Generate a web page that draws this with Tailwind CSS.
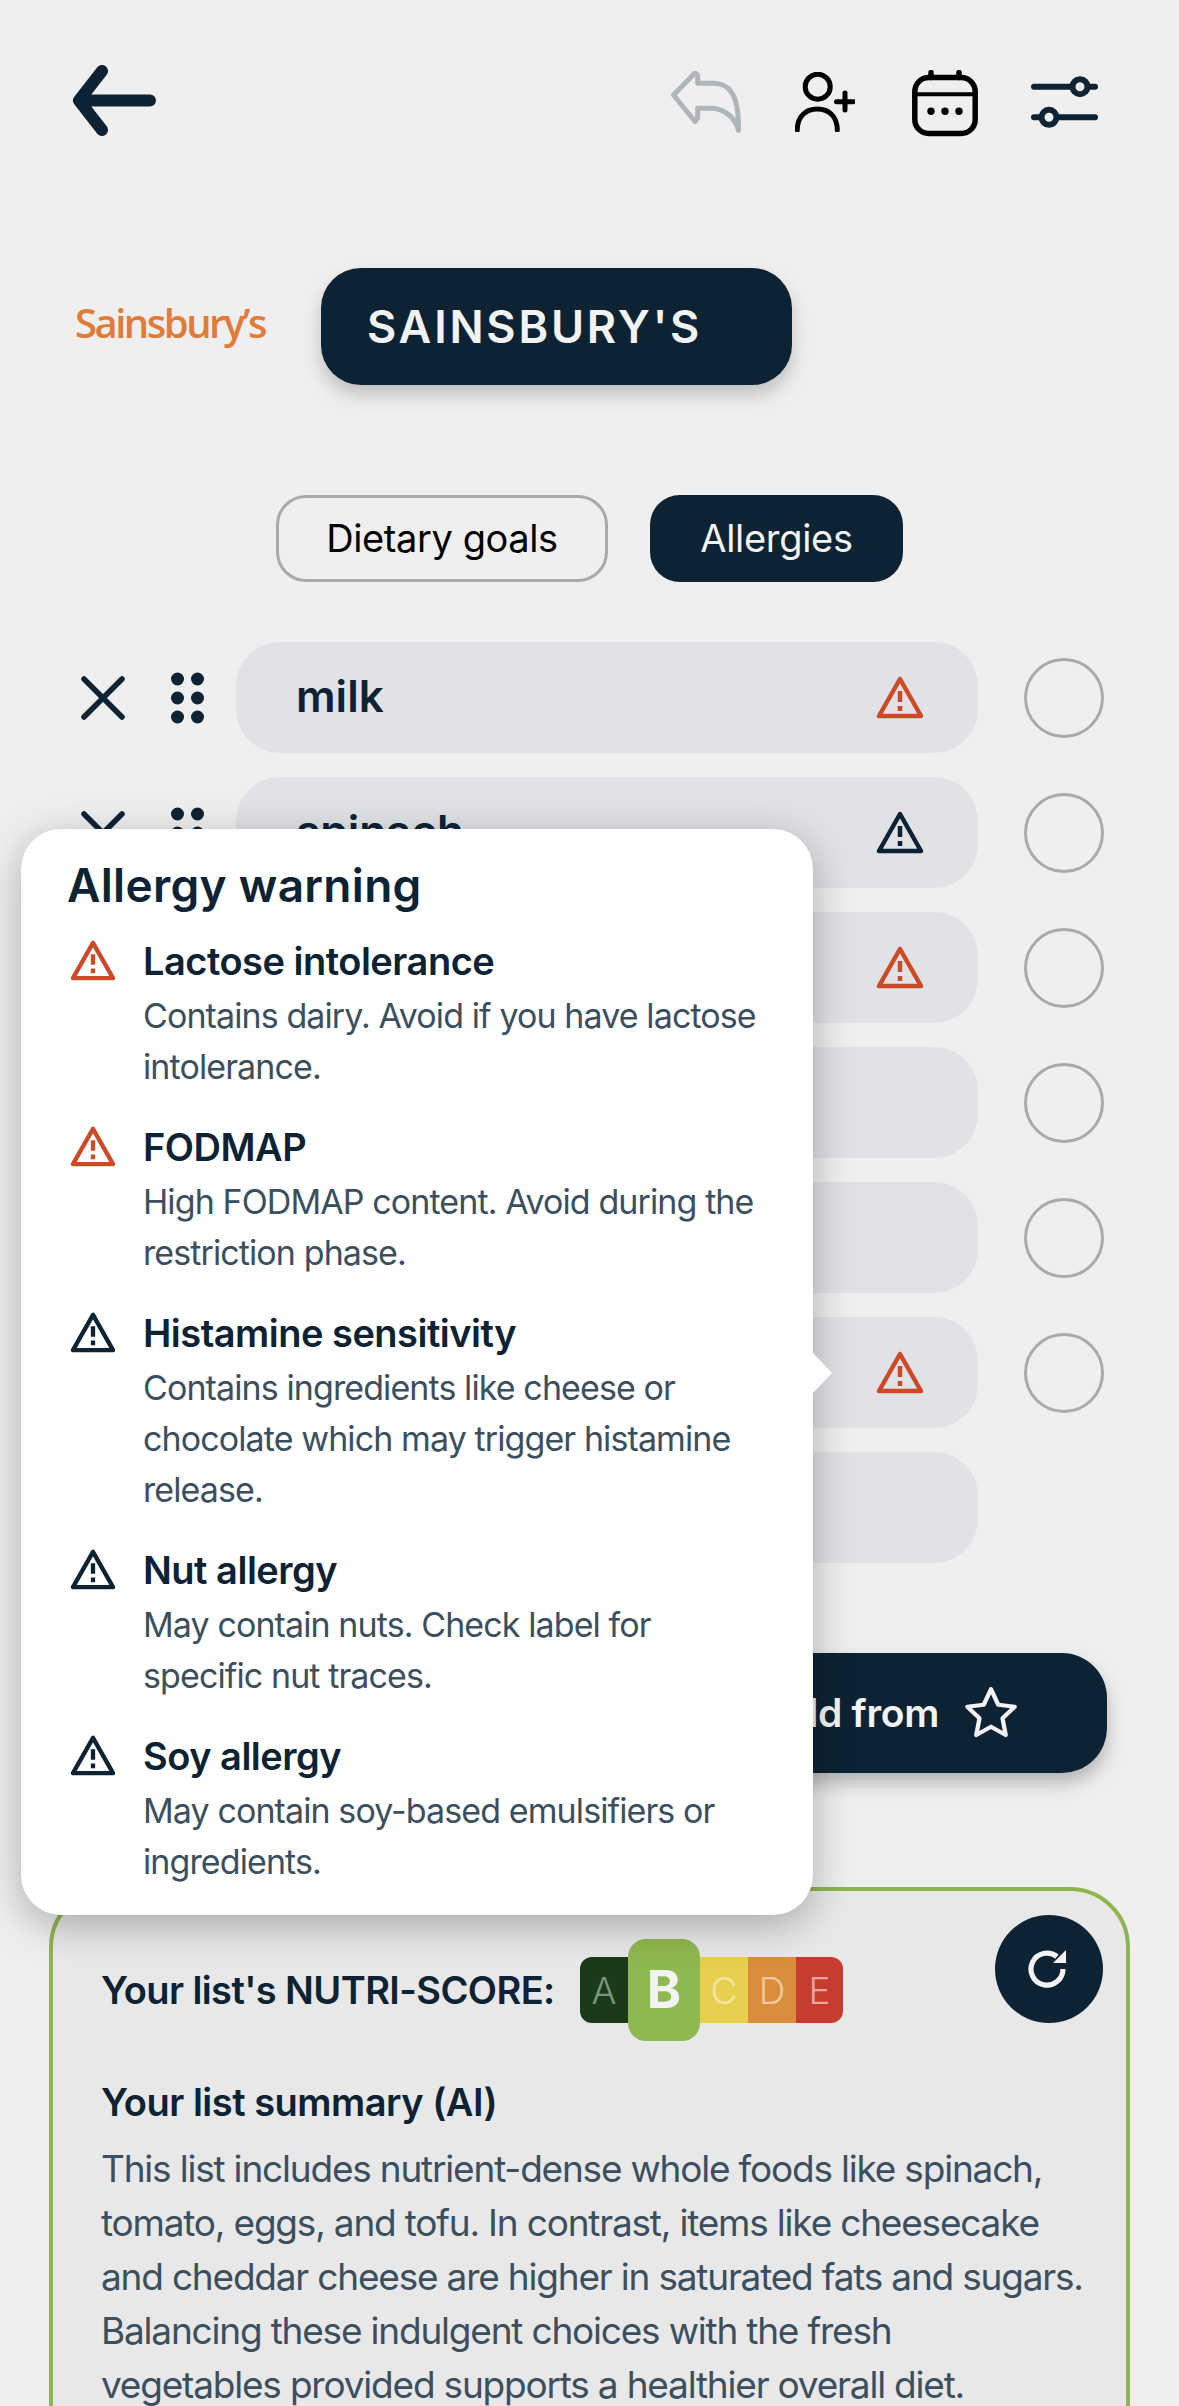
<!DOCTYPE html>
<html lang="en">
<head>
<meta charset="UTF-8">
<meta name="viewport" content="width=device-width, initial-scale=1.0">
<title>Sainsbury's list</title>
<script src="https://cdn.jsdelivr.net/npm/@tailwindcss/browser@4"></script>
</head>
<body class="bg-[#efefef] font-['Inter',sans-serif] text-[#0d2333]">
<div class="relative h-[2406px] w-[1179px] overflow-hidden">

  <!-- Top bar -->
  <header class="flex h-[136px] items-start pl-[72px] pr-[81px] pt-[65px]">
    <svg class="h-[72px] w-[86px]" viewBox="0 0 86 72" fill="none" stroke="#0d2333" stroke-width="12" stroke-linecap="round" stroke-linejoin="round"><path d="M78 35.5H8M30 6L7 35.5 30 65"/></svg>
    <div class="ml-auto flex items-start">
      <svg class="mr-[54px] mt-[6px] h-[62px] w-[70px]" viewBox="0 0 70 62" fill="none" stroke="#aeb6ba" stroke-width="5" stroke-linecap="round" stroke-linejoin="round"><path d="M2.5 24L24 2l2.7 2v8.3H42C58 12.3 68 22 67.5 59.5 64 44 50 37.3 40 37.3H26.7V47L24 50.5z"/></svg>
      <svg class="mr-[57px] mt-[7px] h-[60px] w-[60px]" viewBox="0 0 60 60" fill="none" stroke="#000" stroke-width="5" stroke-linecap="round"><circle cx="22.7" cy="14.7" r="12.5"/><path d="M2.3 58c0-13 8-21 20-21s20 8 20 21M50 21v17M41.5 29.7h17"/></svg>
      <svg class="mr-[53px] mt-[5px] h-[67px] w-[66px]" viewBox="0 0 66 67" fill="none" stroke="#000" stroke-width="5.5" stroke-linecap="round"><rect x="2.8" y="7.5" width="60.4" height="56" rx="14"/><path d="M3 24.3h60" stroke-width="4"/><path d="M19 2.5v5M47 2.5v5"/><circle cx="19" cy="41.3" r="3.7" fill="#000" stroke="none"/><circle cx="33" cy="41.3" r="3.7" fill="#000" stroke="none"/><circle cx="47" cy="41.3" r="3.7" fill="#000" stroke="none"/></svg>
      <svg class="mt-[11px] h-[52px] w-[67px]" viewBox="0 0 67 52" fill="none" stroke="#0d2333" stroke-width="6" stroke-linecap="round"><path d="M3 10.7h61M3 41.3h61"/><circle cx="49" cy="10.7" r="7.5" fill="#efefef"/><circle cx="18" cy="41.3" r="7.5" fill="#efefef"/></svg>
    </div>
  </header>

  <!-- Store -->
  <div class="mt-[132px] flex items-center pl-[75px]">
    <span class="mt-[-8px] w-[246px] font-['Open_Sans',sans-serif] text-[40px] leading-none font-semibold tracking-[-2.5px] text-[#e07b39]">Sainsbury’s</span>
    <div class="flex h-[117px] w-[471px] items-center rounded-[40px] bg-[#0d2333] pl-[46px] text-[45px] font-semibold tracking-[2.8px] text-[#f3f3f3] shadow-[0_10px_18px_rgba(0,0,0,0.2)]">SAINSBURY'S</div>
  </div>

  <!-- Tabs -->
  <div class="mt-[110px] flex justify-start gap-[42px] pl-[276px]">
    <div class="flex h-[87px] w-[332px] items-center justify-center rounded-[30px] border-[3px] border-[#aaaaaa] text-[38px] tracking-[-0.4px] text-black">Dietary goals</div>
    <div class="flex h-[87px] w-[253px] items-center justify-center rounded-[30px] bg-[#0d2333] text-[38px] tracking-[-0.3px] text-[#f3f3f3]">Allergies</div>
  </div>

  <!-- Items -->
  <div class="mt-[60px] flex flex-col gap-[24px]">
    <div class="flex h-[111px] items-center">
      <svg class="ml-[81px] h-[44px] w-[44px]" viewBox="0 0 44 44" stroke="#0d2333" stroke-width="5.5" stroke-linecap="round"><path d="M3 3l38 38M41 3L3 41"/></svg>
      <svg class="ml-[46px] h-[52px] w-[33px]" viewBox="0 0 33 52" fill="#0d2333"><circle cx="6.5" cy="7" r="6.5"/><circle cx="26.5" cy="7" r="6.5"/><circle cx="6.5" cy="26" r="6.5"/><circle cx="26.5" cy="26" r="6.5"/><circle cx="6.5" cy="45" r="6.5"/><circle cx="26.5" cy="45" r="6.5"/></svg>
      <div class="ml-[32px] flex h-[111px] w-[742px] items-center justify-between rounded-[44px] bg-[#e1e2e6] pl-[60px] pr-[54px] text-[44px] font-semibold"><span class="mt-[-3px]">milk</span>
        <svg class="h-[43px] w-[48px]" viewBox="0 0 48 43" fill="none" stroke="#cb4b28" stroke-width="4.5" stroke-linejoin="round"><path d="M24 3L3 40h42z"/><path d="M24 15v11M24 30v5"/></svg>
      </div>
      <span class="ml-[46px] h-[80px] w-[80px] rounded-full border-[3px] border-[#aaaaaa]"></span>
    </div>
    <div class="flex h-[111px] items-center">
      <svg class="ml-[81px] h-[44px] w-[44px]" viewBox="0 0 44 44" stroke="#0d2333" stroke-width="5.5" stroke-linecap="round"><path d="M3 3l38 38M41 3L3 41"/></svg>
      <svg class="ml-[46px] h-[52px] w-[33px]" viewBox="0 0 33 52" fill="#0d2333"><circle cx="6.5" cy="7" r="6.5"/><circle cx="26.5" cy="7" r="6.5"/><circle cx="6.5" cy="26" r="6.5"/><circle cx="26.5" cy="26" r="6.5"/><circle cx="6.5" cy="45" r="6.5"/><circle cx="26.5" cy="45" r="6.5"/></svg>
      <div class="ml-[32px] flex h-[111px] w-[742px] items-center justify-between rounded-[44px] bg-[#e1e2e6] pl-[60px] pr-[54px] text-[44px] font-semibold"><span class="mt-[-3px]">spinach</span>
        <svg class="h-[43px] w-[48px]" viewBox="0 0 48 43" fill="none" stroke="#0d2333" stroke-width="4.5" stroke-linejoin="round"><path d="M24 3L3 40h42z"/><path d="M24 15v11M24 30v5"/></svg>
      </div>
      <span class="ml-[46px] h-[80px] w-[80px] rounded-full border-[3px] border-[#aaaaaa]"></span>
    </div>
    <div class="flex h-[111px] items-center pl-[236px]">
      <div class="flex h-[111px] w-[742px] items-center justify-end rounded-[44px] bg-[#e1e2e6] pr-[54px]">
        <svg class="h-[43px] w-[48px]" viewBox="0 0 48 43" fill="none" stroke="#cb4b28" stroke-width="4.5" stroke-linejoin="round"><path d="M24 3L3 40h42z"/><path d="M24 15v11M24 30v5"/></svg>
      </div>
      <span class="ml-[46px] h-[80px] w-[80px] rounded-full border-[3px] border-[#aaaaaa]"></span>
    </div>
    <div class="flex h-[111px] items-center pl-[236px]">
      <div class="h-[111px] w-[742px] rounded-[44px] bg-[#e1e2e6]"></div>
      <span class="ml-[46px] h-[80px] w-[80px] rounded-full border-[3px] border-[#aaaaaa]"></span>
    </div>
    <div class="flex h-[111px] items-center pl-[236px]">
      <div class="h-[111px] w-[742px] rounded-[44px] bg-[#e1e2e6]"></div>
      <span class="ml-[46px] h-[80px] w-[80px] rounded-full border-[3px] border-[#aaaaaa]"></span>
    </div>
    <div class="flex h-[111px] items-center pl-[236px]">
      <div class="flex h-[111px] w-[742px] items-center justify-end rounded-[44px] bg-[#e1e2e6] pr-[54px]">
        <svg class="h-[43px] w-[48px]" viewBox="0 0 48 43" fill="none" stroke="#cb4b28" stroke-width="4.5" stroke-linejoin="round"><path d="M24 3L3 40h42z"/><path d="M24 15v11M24 30v5"/></svg>
      </div>
      <span class="ml-[46px] h-[80px] w-[80px] rounded-full border-[3px] border-[#aaaaaa]"></span>
    </div>
    <div class="flex h-[111px] items-center pl-[236px]">
      <div class="h-[111px] w-[742px] rounded-[44px] bg-[#e1e2e6]"></div>
    </div>
  </div>

  <!-- Add from -->
  <div class="mt-[90px] flex justify-end pr-[72px]">
    <div class="flex h-[120px] w-[480px] items-center justify-end gap-[22px] rounded-[45px] bg-[#0d2333] pr-[86px] text-[39px] font-semibold tracking-[-0.3px] text-[#f3f3f3] shadow-[0_10px_18px_rgba(0,0,0,0.25)]">
      Add from
      <svg class="h-[60px] w-[60px]" viewBox="0 0 24 24" fill="none" stroke="#f3f3f3" stroke-width="1.7" stroke-linejoin="round"><path d="M12 2.5l2.9 6.2 6.6.8-4.9 4.6 1.3 6.7L12 17.5l-5.9 3.3 1.3-6.7-4.9-4.6 6.6-.8z"/></svg>
    </div>
  </div>

  <!-- Summary card -->
  <section class="ml-[49px] mt-[114px] h-[600px] w-[1081px] rounded-[60px] border-[4px] border-[#8fb54f] bg-[#e8e8e8] pl-[48px] pr-[23px]">
    <div class="flex items-start">
      <div class="mt-[48px] flex items-center">
        <span class="w-[479px] text-[38px] font-semibold tracking-[-0.6px]">Your list's NUTRI-SCORE:</span>
        <div class="flex h-[102px] items-center text-[37px] font-light leading-none">
          <span class="flex h-[66px] w-[48px] items-center justify-center rounded-l-[12px] bg-[#1a3a1a] text-[#7d937d]">A</span>
          <span class="flex h-[102px] w-[72px] items-center justify-center rounded-[18px] bg-[#90b850] text-[52px] font-bold text-[#f3f3f3]">B</span>
          <span class="flex h-[66px] w-[48px] items-center justify-center bg-[#e8cf4f] text-[#f1e5a5]">C</span>
          <span class="flex h-[66px] w-[48px] items-center justify-center bg-[#da8d3c] text-[#efc9a0]">D</span>
          <span class="flex h-[66px] w-[47px] items-center justify-center rounded-r-[12px] bg-[#c73c30] text-[#e8a59f]">E</span>
        </div>
      </div>
      <div class="ml-auto mt-[24px] flex h-[108px] w-[108px] items-center justify-center rounded-full bg-[#0d2333]">
        <svg class="h-[48px] w-[48px]" viewBox="0 0 24 24" fill="none" stroke="#f3f3f3" stroke-width="2.6" stroke-linejoin="round"><path d="M19 12a8 8 0 1 1-3-6.2"/><path d="M20.5 2.5v6.5h-6.5z" fill="#f3f3f3" stroke="none"/></svg>
      </div>
    </div>
    <h3 class="mt-[36px] text-[38px] font-semibold leading-[50px] tracking-[-0.5px]">Your list summary (AI)</h3>
    <p class="mt-[15px] w-[990px] text-[37px] leading-[54px] tracking-[-1.2px] text-[#3b4f5e]">This list includes nutrient-dense whole foods like spinach, tomato, eggs, and tofu. In contrast, items like cheesecake and cheddar cheese are higher in saturated fats and sugars. Balancing these indulgent choices with the fresh<br>vegetables provided supports a healthier overall diet.</p>
  </section>

  <!-- Allergy popup -->
  <aside class="absolute left-[21px] top-[829px] h-[1086px] w-[792px] rounded-[40px] bg-white pl-[46px] pr-[46px] pt-[27px] shadow-[0_10px_40px_rgba(0,0,0,0.28)]">
    <span class="absolute left-[792px] top-[524px] h-[40px] w-[19px] bg-white [clip-path:polygon(0_0,100%_50%,0_100%)]"></span>
    <h2 class="text-[46px] font-semibold leading-[58px] tracking-[0.3px]">Allergy warning</h2>
    <ul class="relative mt-[19px] flex flex-col gap-[27px] text-[#3b4f5e]">
      <li class="flex gap-[27px] pl-[3px]">
        <svg class="mt-[7px] h-[41px] w-[46px] shrink-0" viewBox="0 0 48 43" fill="none" stroke="#cb4b28" stroke-width="4.5" stroke-linejoin="round"><path d="M24 3L3 40h42z"/><path d="M24 15v11M24 30v5"/></svg>
        <div><p class="text-[38px] font-semibold leading-[57px] tracking-[-0.5px] text-[#0d2333]">Lactose intolerance</p><p class="text-[34px] leading-[51px] tracking-[-0.9px]">Contains dairy. Avoid if you have lactose intolerance.</p></div>
      </li>
      <li class="flex gap-[27px] pl-[3px]">
        <svg class="mt-[7px] h-[41px] w-[46px] shrink-0" viewBox="0 0 48 43" fill="none" stroke="#cb4b28" stroke-width="4.5" stroke-linejoin="round"><path d="M24 3L3 40h42z"/><path d="M24 15v11M24 30v5"/></svg>
        <div><p class="text-[38px] font-semibold leading-[57px] tracking-[-0.5px] text-[#0d2333]">FODMAP</p><p class="text-[34px] leading-[51px] tracking-[-0.9px]">High FODMAP content. Avoid during the restriction phase.</p></div>
      </li>
      <li class="flex gap-[27px] pl-[3px]">
        <svg class="mt-[7px] h-[41px] w-[46px] shrink-0" viewBox="0 0 48 43" fill="none" stroke="#0d2333" stroke-width="4.5" stroke-linejoin="round"><path d="M24 3L3 40h42z"/><path d="M24 15v11M24 30v5"/></svg>
        <div><p class="text-[38px] font-semibold leading-[57px] tracking-[-0.5px] text-[#0d2333]">Histamine sensitivity</p><p class="text-[34px] leading-[51px] tracking-[-0.9px]">Contains ingredients like cheese or chocolate which may trigger histamine release.</p></div>
      </li>
      <li class="flex gap-[27px] pl-[3px]">
        <svg class="mt-[7px] h-[41px] w-[46px] shrink-0" viewBox="0 0 48 43" fill="none" stroke="#0d2333" stroke-width="4.5" stroke-linejoin="round"><path d="M24 3L3 40h42z"/><path d="M24 15v11M24 30v5"/></svg>
        <div><p class="text-[38px] font-semibold leading-[57px] tracking-[-0.5px] text-[#0d2333]">Nut allergy</p><p class="text-[34px] leading-[51px] tracking-[-0.9px]">May contain nuts. Check label for specific nut traces.</p></div>
      </li>
      <li class="flex gap-[27px] pl-[3px]">
        <svg class="mt-[7px] h-[41px] w-[46px] shrink-0" viewBox="0 0 48 43" fill="none" stroke="#0d2333" stroke-width="4.5" stroke-linejoin="round"><path d="M24 3L3 40h42z"/><path d="M24 15v11M24 30v5"/></svg>
        <div><p class="text-[38px] font-semibold leading-[57px] tracking-[-0.5px] text-[#0d2333]">Soy allergy</p><p class="text-[34px] leading-[51px] tracking-[-0.9px]">May contain soy-based emulsifiers or ingredients.</p></div>
      </li>
    </ul>
  </aside>
</div>
</body>
</html>
